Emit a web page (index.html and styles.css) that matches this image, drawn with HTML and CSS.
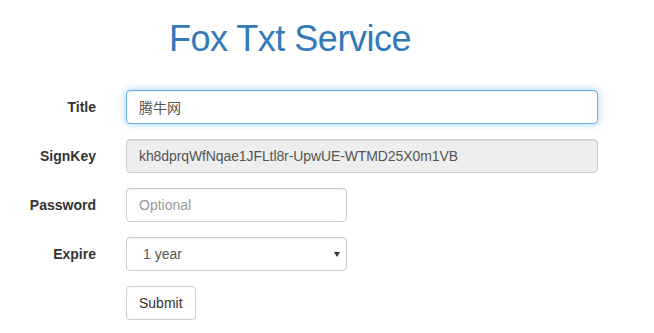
FILE: index.html
```html
<!DOCTYPE html>
<html lang="en">
<head>
<meta charset="utf-8">
<title>Fox Txt Service</title>
<link rel="stylesheet" href="styles.css">
</head>
<body>
<h1 class="brand">Fox Txt Service</h1>
<form class="form">
  <div class="row">
    <label class="label" for="title">Title</label>
    <input class="control control-wide is-focus" id="title" type="text" value="腾牛网">
  </div>
  <div class="row">
    <label class="label" for="signkey">SignKey</label>
    <input class="control control-wide key" id="signkey" type="text" value="kh8dprqWfNqae1JFLtl8r-UpwUE-WTMD25X0m1VB" disabled>
  </div>
  <div class="row">
    <label class="label" for="password">Password</label>
    <input class="control control-narrow" id="password" type="password" placeholder="Optional">
  </div>
  <div class="row">
    <label class="label" for="expire">Expire</label>
    <span class="select-wrap">
      <select class="control control-narrow select" id="expire">
        <option>1 year</option>
        <option>1 month</option>
        <option>1 day</option>
      </select>
    </span>
  </div>
  <div class="row">
    <span class="label"></span>
    <button class="btn" type="submit">Submit</button>
  </div>
</form>
</body>
</html>
```

FILE: styles.css
```css
* { box-sizing: border-box; }
html, body { margin: 0; padding: 0; background: #fff; }
body {
  font-family: "Liberation Sans", Arial, "Noto Sans CJK SC", sans-serif;
  font-size: 14px;
  line-height: 20px;
  color: #333;
}
.brand {
  margin: 19px 0 31px 169px;
  font-size: 36px;
  line-height: 40px;
  font-weight: 400;
  letter-spacing: -0.5px;
  color: #337ab7;
}
.form {
  display: flex;
  flex-direction: column;
  gap: 15px;
}
.row {
  display: grid;
  grid-template-columns: 96px auto;
  column-gap: 30px;
  justify-content: start;
  align-items: start;
}
.label {
  text-align: right;
  font-weight: 700;
  padding-top: 7px;
  line-height: 20px;
}
.control {
  display: block;
  height: 34px;
  padding: 6px 12px;
  font-family: "Liberation Sans", Arial, "Noto Sans CJK SC", sans-serif;
  font-size: 14px;
  line-height: 20px;
  color: #555;
  background: #fff;
  border: 1px solid #ccc;
  border-radius: 4px;
  box-shadow: inset 0 1px 1px rgba(0,0,0,.075);
  outline: none;
}
.control-wide { width: 472px; }
.control-narrow { width: 221px; }
.key { letter-spacing: -0.1px; }
.control::placeholder { color: #999; }
.control:disabled { background: #eee; color: #555; }
.is-focus {
  border-color: #66afe9;
  box-shadow: inset 0 1px 1px rgba(0,0,0,.075), 0 0 8px rgba(102,175,233,.6);
}
.select-wrap { position: relative; display: block; width: 221px; }
.select {
  appearance: none;
  -webkit-appearance: none;
  padding-left: 16px;
}
.select-wrap::after {
  content: "";
  position: absolute;
  right: 7px;
  top: 15px;
  border-left: 3px solid transparent;
  border-right: 3px solid transparent;
  border-top: 5px solid #333;
  pointer-events: none;
}
.btn {
  height: 34px;
  padding: 6px 12px;
  font-family: "Liberation Sans", Arial, sans-serif;
  font-size: 14px;
  line-height: 20px;
  color: #333;
  background: #fff;
  border: 1px solid #ccc;
  border-radius: 4px;
  cursor: pointer;
}
```
